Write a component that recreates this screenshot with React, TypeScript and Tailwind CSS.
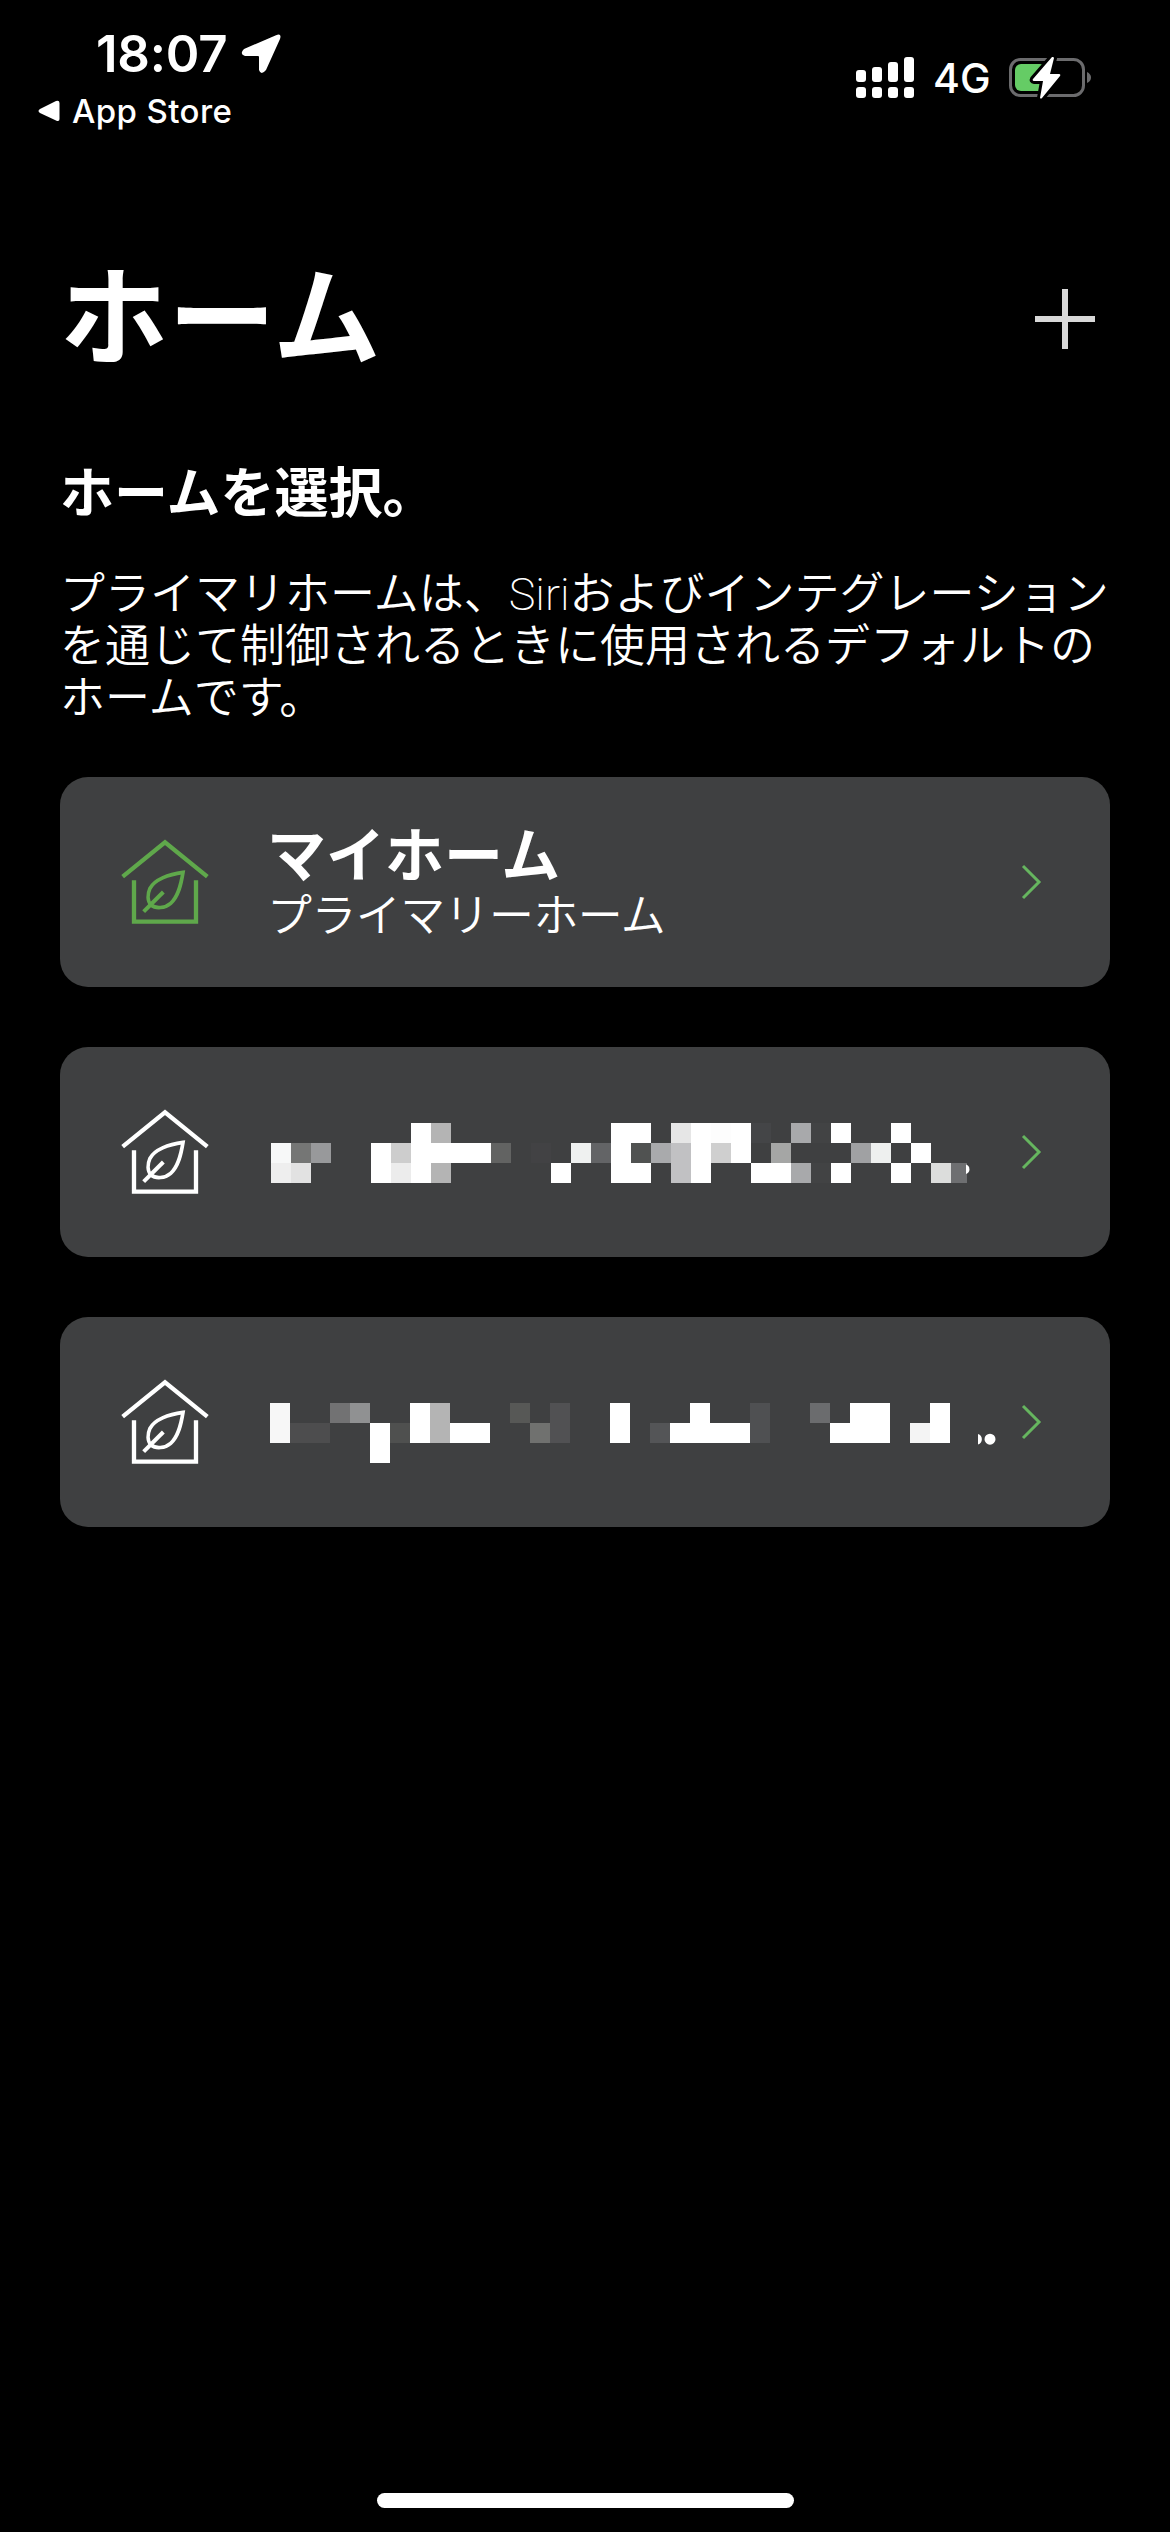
type HomeProps = {
  name: string;
  caption?: string;
  primary?: boolean;
  mosaic?: MosaicProps;
};

type MosaicProps = {
  // [column, row, columns, rows, fill] in 20px cells
  cells: [number, number, number, number, string][];
  className: string;
  dots: string;
};

const W = "#ffffff";

const firstMosaic: MosaicProps = {
  className: "mt-[2px]",
  dots: "M695 41.5 a5 5 0 0 1 0 9.5 z",
  cells: [
    [0, 1, 1, 1, "#f7f8f8"],
    [1, 1, 1, 1, "#757675"],
    [2, 1, 1, 1, "#98999b"],
    [0, 2, 1, 1, "#eeeeee"],
    [1, 2, 1, 1, "#e2e2e2"],
    [5, 1, 1, 2, W],
    [6, 1, 1, 1, "#cdcdcd"],
    [6, 2, 1, 1, "#ececec"],
    [7, 0, 1, 3, W],
    [8, 0, 1, 1, "#b4b4b4"],
    [8, 1, 3, 1, W],
    [8, 2, 1, 1, "#b4b4b4"],
    [11, 1, 1, 1, "#626362"],
    [13, 1, 1, 1, "#424244"],
    [14, 2, 1, 1, W],
    [15, 1, 1, 1, "#eff1f0"],
    [16, 1, 1, 1, "#636466"],
    [17, 0, 1, 3, W],
    [18, 0, 1, 3, W],
    [18, 1, 1, 1, "#505251"],
    [19, 1, 1, 1, "#a9aaac"],
    [20, 0, 1, 1, "#e6e6e6"],
    [20, 1, 1, 2, "#c1c1c3"],
    [21, 0, 1, 3, W],
    [22, 0, 1, 1, "#fdfdfd"],
    [22, 1, 1, 1, "#cfcfcf"],
    [23, 0, 1, 2, W],
    [24, 0, 1, 1, "#444547"],
    [24, 2, 2, 1, W],
    [25, 1, 1, 1, "#a5a6a5"],
    [26, 0, 1, 1, "#a8a9ab"],
    [26, 2, 1, 1, "#a8a9ab"],
    [27, 0, 1, 1, "#424344"],
    [27, 2, 1, 1, "#424344"],
    [28, 0, 1, 1, W],
    [28, 2, 1, 1, W],
    [29, 1, 1, 1, "#a0a1a3"],
    [30, 1, 1, 1, "#eef0ef"],
    [31, 0, 1, 1, W],
    [31, 2, 1, 1, W],
    [32, 1, 1, 1, W],
    [33, 2, 1, 1, "#dcdddc"],
    [34, 2, 0.8, 1, "#6e6f71"],
  ],
};

const secondMosaic: MosaicProps = {
  className: "mt-[22px] -ml-px",
  dots: "M708 31 a5.5 5.5 0 0 1 0 10.5 z M714.5 36.2 a5.5 5.5 0 1 1 11 0 a5.5 5.5 0 1 1 -11 0 z",
  cells: [
    [0, 0, 1, 2, "#f7f7f7"],
    [1, 1, 2, 1, "#4d4d4e"],
    [3, 0, 1, 1, "#727273"],
    [4, 0, 1, 1, "#909192"],
    [5, 1, 1, 2, W],
    [6, 1, 1, 1, "#4f504f"],
    [7, 0, 1, 2, W],
    [8, 0, 1, 2, "#b4b4b4"],
    [9, 1, 2, 1, W],
    [12, 0, 1, 1, "#575856"],
    [13, 1, 1, 1, "#70716f"],
    [14, 0, 1, 2, "#515153"],
    [17, 0, 1, 2, W],
    [19, 1, 1, 1, "#545557"],
    [20, 1, 4, 1, W],
    [21, 0, 1, 1, W],
    [24, 0, 1, 2, "#4f5052"],
    [27, 0, 1, 1, "#6b6c6e"],
    [28, 1, 1, 1, W],
    [29, 0, 2, 2, W],
    [32, 1, 1, 1, "#f4f4f4"],
    [33, 0, 1, 2, W],
  ],
};

const homes: HomeProps[] = [
  { name: "マイホーム", caption: "プライマリーホーム", primary: true },
  { name: "home-2", mosaic: firstMosaic },
  { name: "home-3", mosaic: secondMosaic },
];

const Mosaic = ({ cells, className, dots }: MosaicProps) => {
  return (
    <svg width="730" height="60" viewBox="0 0 730 60" shapeRendering="crispEdges" className={className}>
      {cells.map(([x, y, w, h, fill]) => (
        <rect key={`${x}-${y}`} x={x * 20} y={y * 20} width={w * 20} height={h * 20} fill={fill} />
      ))}
      <path d={dots} fill={W} shapeRendering="auto" />
    </svg>
  );
};

const HouseIcon = ({ className }: { className: string }) => {
  return (
    <svg
      width="90"
      height="90"
      viewBox="60 50 270 270"
      fill="none"
      stroke="currentColor"
      strokeWidth="13"
      className={className}
    >
      <path d="M68 169 195 66 322 169" />
      <path d="M102 180V304H288V180" />
      <path
        d="M249 156C205 162 163 178 150 204C142 222 142 242 153 254C167 266 195 264 212 249C235 229 243 193 249 156Z"
        strokeWidth="11"
      />
      <path d="M131 274 190 215" strokeWidth="12" />
    </svg>
  );
};

const HomeCard = ({ name, caption, primary, mosaic }: HomeProps) => {
  return (
    <li className="flex h-[210px] items-center rounded-[28px] bg-[#3f4041] pl-[60px] pr-[67px]">
      <HouseIcon className={primary ? "shrink-0 text-[#5fa84b]" : "shrink-0 text-white"} />

      <div className="ml-[61px] w-[730px] shrink-0">
        {mosaic ? (
          <Mosaic {...mosaic} />
        ) : (
          <div className="-ml-[4px] mb-[4px]">
            <p className="text-[59px] leading-[66px] font-bold">{name}</p>
            <p className="text-[45px] leading-[56px] font-[350] tracking-[-0.6px]">{caption}</p>
          </div>
        )}
      </div>

      <svg width="22" height="36" viewBox="0 0 22 36" fill="none" className="ml-auto shrink-0">
        <path d="M2 2 18 18 2 34" stroke="#66b55f" strokeWidth="3" />
      </svg>
    </li>
  );
};

const StatusBar = () => {
  return (
    <header className="flex h-[141px] justify-between font-['Inter','Liberation_Sans',sans-serif]">
      <div className="pl-[38px] pt-[30px]">
        <div className="flex h-[48px] items-center pl-[58px]">
          <span className="text-[51px] leading-[48px] font-semibold tracking-[-0.2px]">18:07</span>
          <svg width="40" height="40" viewBox="0 0 40 40" className="ml-[13px]">
            <path d="M35 1.2Q41 -1 39 5L25 36Q20 42 18 36V23Q18 22 17 22H4Q-2 20 3 15Z" fill={W} />
          </svg>
        </div>
        <div className="mt-[13px] flex h-[40px] items-center">
          <svg width="22" height="22" viewBox="0 0 22 22">
            <path d="M2 9 18 1Q21.5 0 21.5 3V19Q21.5 22 18 20.5L2 13Q-1 11 2 9Z" fill={W} />
          </svg>
          <span className="ml-[12px] text-[33px] leading-[40px] font-medium tracking-[0.4px]">App Store</span>
        </div>
      </div>

      <div className="mt-[57px] flex h-[42px] items-center pr-[78px]">
        <svg width="59" height="42" viewBox="0 0 59 42" fill={W}>
          <rect x="0" y="13" width="10" height="12" rx="3" />
          <rect x="16" y="10" width="10" height="15" rx="3" />
          <rect x="32" y="5" width="10" height="20" rx="3" />
          <rect x="48" y="0" width="10" height="25" rx="3" />
          <rect x="0" y="30" width="10" height="11" rx="3" />
          <rect x="16" y="30" width="10" height="11" rx="3" />
          <rect x="32" y="30" width="10" height="11" rx="3" />
          <rect x="48" y="30" width="10" height="11" rx="3" />
        </svg>
        <span className="ml-[18px] w-[57px] text-[41px] leading-[42px] font-medium">4G</span>
        <svg width="84" height="42" viewBox="0 0 84 42" className="ml-[18px]">
          <rect x="2.5" y="2.5" width="73" height="36" rx="10" fill="none" stroke="#6b6b6d" strokeWidth="3" />
          <path d="M79 15Q83 17 83 20.5T79 26Z" fill="#6b6b6d" />
          <rect x="7" y="7" width="31" height="27" rx="6" fill="#65cc65" />
          <path
            d="M44 0 25 22Q24 24 26 24H35L32 41Q33 42 34 41L52 19Q53 17 51 17H42L46 1Q45 -1 44 0Z"
            fill={W}
            stroke="#000000"
            strokeWidth="6"
            paintOrder="stroke"
          />
        </svg>
      </div>
    </header>
  );
};

export default function App() {
  return (
    <div className="flex h-[2532px] w-[1170px] flex-col overflow-hidden bg-black font-['Noto_Sans_CJK_JP',sans-serif] text-white">
      <StatusBar />

      <main className="flex flex-1 flex-col px-[60px]">
        <div className="mt-[94px] flex h-[150px] items-center justify-between pr-[15px]">
          <h1 className="text-[108px] leading-[150px] font-bold">ホーム</h1>
          <svg width="60" height="60" viewBox="0 0 60 60" className="mt-[18px]">
            <path d="M30 0V60M0 30H60" stroke="#d8d8d8" strokeWidth="6" />
          </svg>
        </div>

        <h2 className="mt-[65px] text-[54px] leading-[80px] font-bold">ホームを選択。</h2>

        <p className="mt-[35px] text-[45px] leading-[51.5px] font-[350] whitespace-nowrap">
          プライマリホームは、
          <span className="font-['Roboto'] leading-none font-extralight">Siri</span>
          およびインテグレーション
          <br />
          を通じて制御されるときに使用されるデフォルトの
          <br />
          ホームです。
        </p>

        <ul className="mt-[57px] flex flex-col gap-[60px]">
          {homes.map((home) => (
            <HomeCard key={home.name} {...home} />
          ))}
        </ul>
      </main>

      <div className="mx-auto mb-[24px] h-[15px] w-[417px] rounded-full bg-white" />
    </div>
  );
}
